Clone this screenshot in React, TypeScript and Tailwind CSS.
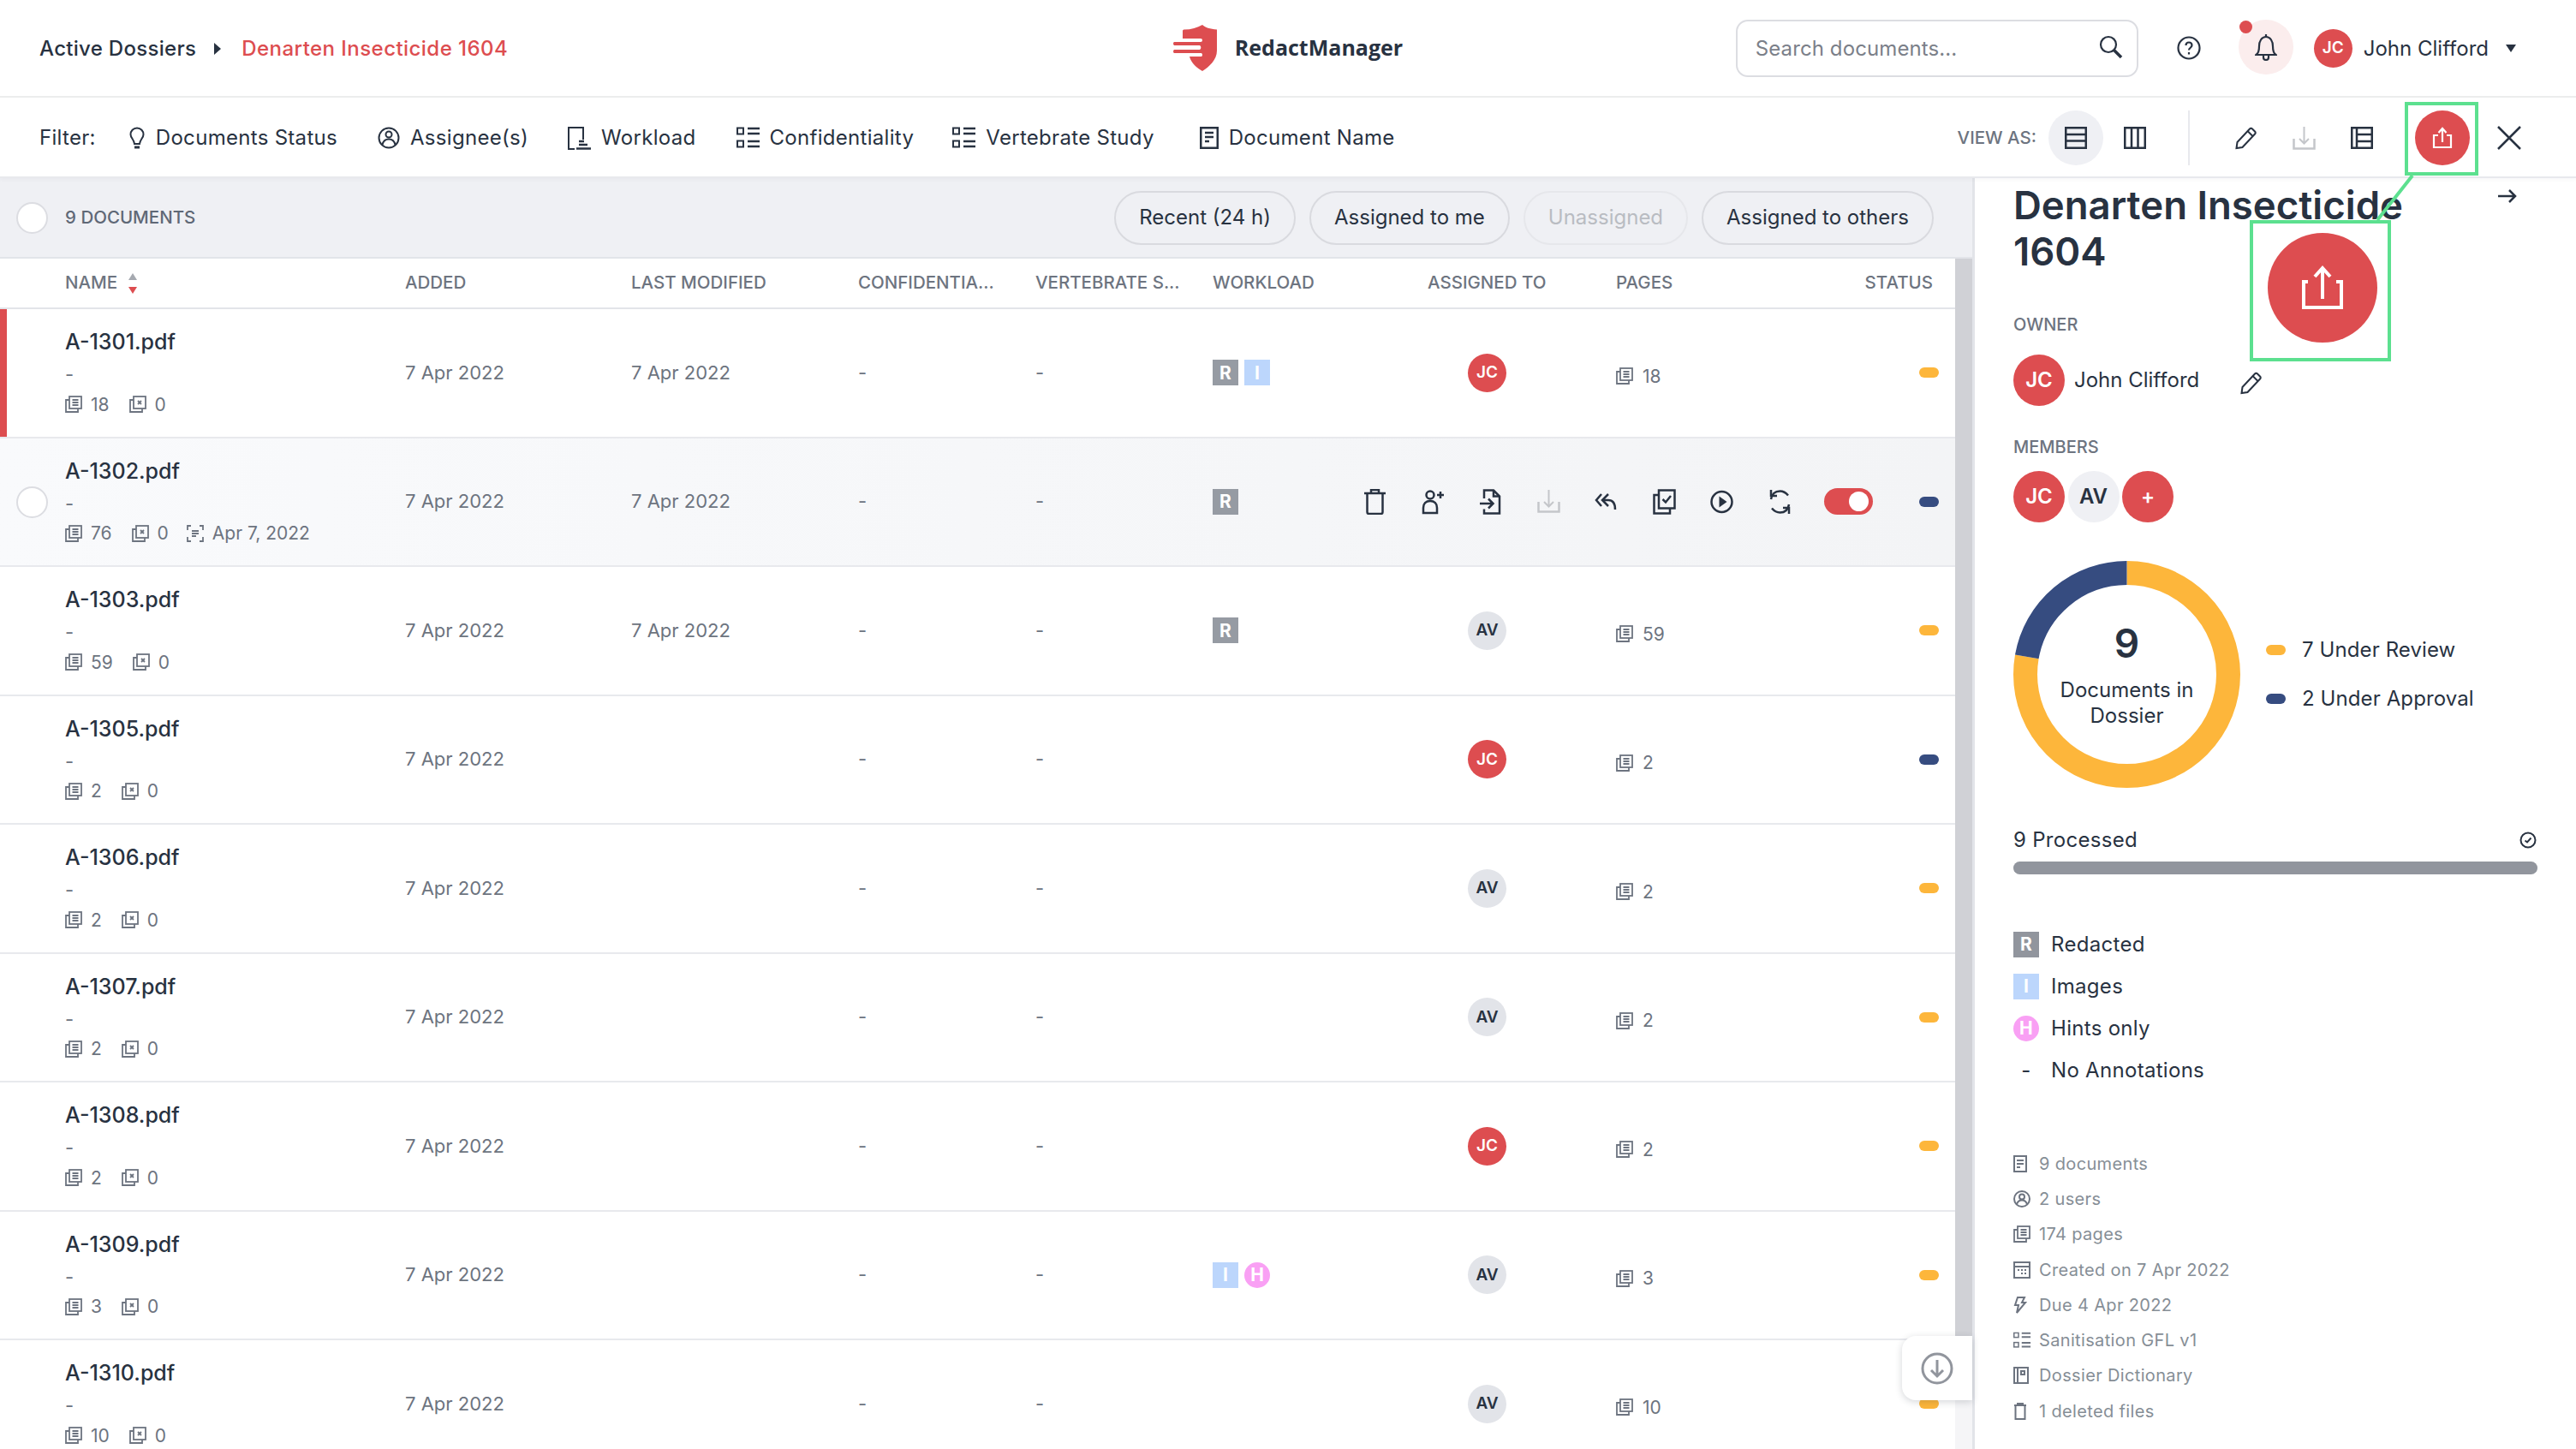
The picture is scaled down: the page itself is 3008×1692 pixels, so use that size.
import React, { FunctionComponent, ReactNode } from 'react'

const Ico: FunctionComponent<{ size?: number; w?: number; children: ReactNode; className?: string; sw?: number }> = ({
  size = 28,
  w,
  children,
  className = 'text-[#283241]',
  sw = 2,
}) => (
  <svg
    width={w ?? size}
    height={size}
    viewBox={`0 0 ${w ?? size} ${size}`}
    fill="none"
    stroke="currentColor"
    strokeWidth={sw}
    className={`shrink-0 ${className}`}
  >
    {children}
  </svg>
)

const BulbIcon = () => (
  <Ico w={20} size={26}>
    <path d="M10 1.500c4.500 0 7.500 3.500 7.500 7.500 0 4-4 6-4.500 11H7C6.500 15 2.500 13 2.500 9c0-4 3-7.500 7.500-7.500z" />
    <path d="M7 24h6" strokeWidth="3" />
  </Ico>
)
const UserCircleIcon: FunctionComponent<{ className?: string }> = ({ className }) => (
  <Ico size={26} className={className} w={26}>
    <circle cx="13" cy="13" r="11.500" />
    <circle cx="13" cy="9" r="3.500" />
    <path d="M5.500 21c1-4.500 4-6.500 7.500-6.500s6.500 2 7.500 6.500" />
  </Ico>
)
const WorkloadIcon = () => (
  <Ico w={28} size={28}>
    <path d="M9 27H2V2h17v14" />
    <path d="M14 18h6M14 22h10M11 26.500h17" strokeWidth="2.500" />
  </Ico>
)
const BoxListIcon: FunctionComponent<{ className?: string }> = ({ className }) => (
  <Ico w={27} size={26} className={className}>
    <rect x="1" y="1.500" width="7" height="7" />
    <rect x="1" y="16.500" width="7" height="7" />
    <path d="M13 2h14M13 8h14M13 17h14M13 23h14" strokeWidth="2.500" />
  </Ico>
)
const DocIcon = () => (
  <Ico w={22} size={26} sw={2.500}>
    <rect x="1.250" y="1.250" width="19.500" height="23.500" />
    <path d="M6 7h10M6 12h10M6 17h5" />
  </Ico>
)
const RowsIcon = () => (
  <Ico w={26} size={26} sw={2.500}>
    <rect x="1.250" y="1.250" width="23.500" height="23.500" />
    <path d="M1 9h24M1 16.500h24" />
  </Ico>
)
const ColsIcon = () => (
  <Ico w={26} size={26} sw={2.500}>
    <rect x="1.250" y="1.250" width="23.500" height="23.500" />
    <path d="M9 1v24M16.500 1v24" />
  </Ico>
)
const TableIcon = () => (
  <Ico w={26} size={26} sw={2.500}>
    <rect x="1.250" y="1.250" width="23.500" height="23.500" />
    <path d="M7 1v24M7 9h18M7 17h18" />
  </Ico>
)
const PencilIcon = () => (
  <Ico w={27} size={27}>
    <path d="M2.500 25l1-7L18 2.500c1-1 2-1 3 0l3 3c1 1 1 2 0 3L9.500 24z" />
    <path d="M15.500 5l6 6" />
  </Ico>
)
const DownloadIcon = () => (
  <Ico w={27} size={27} className="text-[#c4c6ca]">
    <path d="M13.500 0v19M8 14l5.500 5.500L19 14" />
    <path d="M1.500 14v11.500h24V14" strokeWidth="2.500" />
  </Ico>
)
const ExportIcon: FunctionComponent<{ big?: boolean }> = ({ big }) => (
  <Ico size={big ? 54 : 26} w={big ? 48 : 24} className="text-white" sw={big ? 4 : 2.200}>
    {big ? (
      <>
        <path d="M7 20H2v30h44V20h-6" />
        <path d="M24 40V4M15 14l9-10 9 10" />
      </>
    ) : (
      <>
        <path d="M7 10H2v14h20V10h-5" />
        <path d="M12 18V2M7.500 7L12 2l4.500 5" />
      </>
    )}
  </Ico>
)

const PagesIcon: FunctionComponent = () => (
  <Ico w={20} size={20} className="text-[#6d7480]" sw={1.800}>
    <rect x="5" y="1" width="14" height="14" />
    <path d="M5 5H1v14h14v-4M8.500 5h7M8.500 8h7M8.500 11h7" />
  </Ico>
)
const ExcludedIcon: FunctionComponent = () => (
  <Ico w={20} size={20} className="text-[#6d7480]" sw={1.800}>
    <rect x="5" y="1" width="14" height="14" />
    <path d="M5 5H1v14h14v-4M10 6l4 4M14 6l-4 4" />
  </Ico>
)
const OcrIcon: FunctionComponent = () => (
  <Ico w={20} size={20} className="text-[#6d7480]" sw={1.800}>
    <path d="M1 6V1h4M15 1h4v5M1 14v5h4M15 19h4v-5M6 7h8M6 10h8M6 13h5" />
  </Ico>
)

const Avatar: FunctionComponent<{ initials: string; large?: boolean; light?: boolean }> = ({ initials, large, light }) => {
  const isRed = initials === 'JC' || initials === '+'
  return (
    <div
      className={`flex items-center justify-center rounded-full font-semibold shrink-0 ${
        large ? 'w-[60px] h-[60px] text-[24px]' : 'w-[45px] h-[45px] text-[19px]'
      } ${isRed ? 'bg-[#dd4d50] text-white' : light ? 'bg-[#eff0f4] text-[#283241]' : 'bg-[#e2e4e9] text-[#283241]'}`}
    >
      {initials}
    </div>
  )
}

const Badge: FunctionComponent<{ type: string }> = ({ type }) => {
  if (type === 'R')
    return <div className="w-[30px] h-[30px] flex items-center justify-center bg-[#969ba3] text-white text-[21px] font-bold">R</div>
  if (type === 'I')
    return <div className="w-[30px] h-[30px] flex items-center justify-center bg-[#bcd6fc] text-white text-[21px] font-bold">I</div>
  return <div className="w-[30px] h-[30px] rounded-full flex items-center justify-center bg-[#f9a0f4] text-white text-[21px] font-bold">H</div>
}

const StatusBar: FunctionComponent<{ navy?: boolean }> = ({ navy }) => (
  <div className={`w-[23px] h-[12px] rounded-full ${navy ? 'bg-[#364c80]' : 'bg-[#fdb63b]'}`} />
)

const Circle: FunctionComponent = () => (
  <div className="w-[37px] h-[37px] rounded-full bg-white border-2 border-[#dcdde2]" />
)

type Doc = {
  name: string
  pages: number
  ocr?: string
  workload: string[]
  owner: string
  navy?: boolean
  modified?: boolean
}

const docs: Doc[] = [
  { name: 'A-1301.pdf', pages: 18, workload: ['R', 'I'], owner: 'JC', modified: true },
  { name: 'A-1302.pdf', pages: 76, ocr: 'Apr 7, 2022', workload: ['R'], owner: '', navy: true, modified: true },
  { name: 'A-1303.pdf', pages: 59, workload: ['R'], owner: 'AV', modified: true },
  { name: 'A-1305.pdf', pages: 2, workload: [], owner: 'JC', navy: true },
  { name: 'A-1306.pdf', pages: 2, workload: [], owner: 'AV' },
  { name: 'A-1307.pdf', pages: 2, workload: [], owner: 'AV' },
  { name: 'A-1308.pdf', pages: 2, workload: [], owner: 'JC' },
  { name: 'A-1309.pdf', pages: 3, workload: ['I', 'H'], owner: 'AV' },
  { name: 'A-1310.pdf', pages: 10, workload: [], owner: 'AV' },
]

const rowCols = 'grid grid-cols-[473px_264px_265px_207px_207px_251px_220px_1fr_160px]'

const RowActions: FunctionComponent = () => (
  <div className="absolute right-[96px] top-0 bottom-0 flex items-center gap-[40.500px]">
    <Ico w={27} size={30}>
      <path d="M1 5h25M9 4V1h9v3" strokeWidth="2.500" />
      <path d="M4.500 5v22c0 1 .5 2 2 2h14c1.500 0 2-1 2-2V5" strokeWidth="2.500" />
    </Ico>
    <Ico w={27} size={30}>
      <circle cx="10" cy="7" r="4.500" strokeWidth="2.500" />
      <path d="M2 28v-6c0-5 3-8 8-8s8 3 8 8v6zM18 7h8M22 3v8" strokeWidth="2.500" />
    </Ico>
    <Ico w={27} size={30} sw={2.500}>
      <path d="M6 11V1.500h11l7 7v20H6v-5" />
      <path d="M17 1.500v7h7M1 17h15M11 11.500l5.500 5.500-5.500 5.500" />
    </Ico>
    <DownloadIcon />
    <Ico w={27} size={24} sw={2.500}>
      <path d="M8 3L2 10l6 7M16 3l-7 7 7 7M9 10h7c5 0 8 4 8 11" />
    </Ico>
    <Ico w={27} size={30} sw={2.500}>
      <rect x="7" y="1.500" width="18.500" height="21" />
      <path d="M7 7H1.500v21.500H20V23M11.500 12l3.500 3.500 6-7.500" />
    </Ico>
    <Ico w={27} size={30} sw={2.500}>
      <circle cx="13.500" cy="15" r="12" />
      <path d="M10.500 8.500v13l9-6.500z" fill="currentColor" stroke="none" />
    </Ico>
    <Ico w={27} size={30} sw={2.500}>
      <path d="M3 12C4 6 8 2.500 13.500 2.500c4 0 7 2 9.500 5M24 18c-1 6-5 9.500-10.500 9.500-4 0-7-2-9.500-5" />
      <path d="M3 1v7h7M24 29v-7h-7" />
    </Ico>
    <div className="w-[57px] h-[31px] rounded-full bg-[#dd4d50] flex items-center justify-end pr-[5px] -ml-[2px]">
      <div className="w-[23px] h-[23px] rounded-full bg-white" />
    </div>
  </div>
)

const DocRow: FunctionComponent<{ doc: Doc; index: number }> = ({ doc, index }) => {
  const hovered = index === 1
  const date = 'text-[22px] text-[#6d7480] self-center'
  return (
    <div
      className={`relative h-[150.500px] border-b-2 border-[#e8e9ed] ${rowCols} ${
        hovered ? 'bg-gradient-to-r from-[#f9fafc] to-[#f3f4f6]' : 'bg-white'
      } ${index === 0 ? 'shadow-[inset_8px_0_0_#dd4d50]' : ''}`}
    >
      {hovered && (
        <div className="absolute left-[19px] top-[56px]">
          <Circle />
        </div>
      )}
      <div className="flex flex-col justify-center pl-[76px] pb-[1px] leading-none">
        <div className="text-[25px] font-medium text-[#283241] h-[30px] leading-[30px]">{doc.name}</div>
        <div className="text-[22px] text-[#6d7480] mt-[8px] h-[30px] leading-[30px]">-</div>
        <div className="flex items-center text-[21px] text-[#6d7480] mt-[7px] h-[26px]">
          <PagesIcon />
          <span className="ml-[10px] mr-[23px]">{doc.pages}</span>
          <ExcludedIcon />
          <span className="ml-[10px]">0</span>
          {doc.ocr && (
            <>
              <span className="ml-[21px]">
                <OcrIcon />
              </span>
              <span className="ml-[10px]">{doc.ocr}</span>
            </>
          )}
        </div>
      </div>
      <div className={date}>7 Apr 2022</div>
      <div className={date}>{doc.modified ? '7 Apr 2022' : ''}</div>
      <div className={date}>-</div>
      <div className={date}>-</div>
      <div className="flex items-center gap-[7px]">
        {doc.workload.map((b) => (
          <Badge key={b} type={b} />
        ))}
      </div>
      <div className="flex items-center pl-[47px]">{doc.owner && <Avatar initials={doc.owner} />}</div>
      {doc.owner ? (
        <div className="flex items-center gap-[11px] text-[21px] text-[#6d7480] pt-[8px]">
          <PagesIcon />
          {doc.pages}
        </div>
      ) : (
        <div />
      )}
      <div className="flex items-center justify-end pr-[19px]">
        <StatusBar navy={doc.navy} />
      </div>
      {hovered && <RowActions />}
    </div>
  )
}

const FilterItem: FunctionComponent<{ icon: ReactNode; label: string; className?: string }> = ({ icon, label, className = '' }) => (
  <div className={`flex items-center gap-[12px] ${className}`}>
    {icon}
    <span>{label}</span>
  </div>
)

const SectionLabel: FunctionComponent<{ children?: ReactNode }> = ({ children }) => (
  <div className="text-[20px] leading-[24px] font-medium text-[#6d7480]">{children}</div>
)

const Stat: FunctionComponent<{ icon: ReactNode; label: string }> = ({ icon, label }) => (
  <div className="flex items-center h-[41.300px] text-[#868e96] text-[20px] tracking-[0.35px]">
    <div className="w-[30px] flex items-center">{icon}</div>
    {label}
  </div>
)

const statIcon = 'text-[#6d7480]'

const DetailsPanel: FunctionComponent = () => (
  <div className="w-[705px] shrink-0 border-l-[3px] border-[#e2e4e9] pl-[45px] pr-[45px] pt-[5px] bg-white">
    <div className="relative">
      <h1 className="text-[45.500px] leading-[54px] font-semibold text-[#283241] w-[480px]">Denarten Insecticide 1604</h1>
      <svg width="28" height="20" viewBox="0 0 28 20" fill="none" stroke="currentColor" strokeWidth="2.500" className="absolute right-[22px] top-[6px] text-[#283241]">
        <path d="M4 10h20M17 3l7 7-7 7" />
      </svg>
    </div>
    <div className="mt-[46px]">
      <SectionLabel>OWNER</SectionLabel>
    </div>
    <div className="flex items-center mt-[23px] h-[60px]">
      <Avatar initials="JC" large />
      <span className="ml-[11px] text-[24px] text-[#283241]">John Clifford</span>
      <span className="ml-[47px] mt-[6px]">
        <PencilIcon />
      </span>
    </div>
    <div className="mt-[36px]">
      <SectionLabel>MEMBERS</SectionLabel>
    </div>
    <div className="flex gap-[3.500px] mt-[16px]">
      <Avatar initials="JC" large />
      <Avatar initials="AV" large light />
      <Avatar initials="+" large />
    </div>
    <div className="flex items-center gap-[30px] mt-[45px]">
      <div className="relative w-[265px] h-[265px]">
        <svg width="265" height="265" viewBox="0 0 265 265" fill="none" strokeWidth="28" className="-rotate-90">
          <circle cx="132.500" cy="132.500" r="118.500" stroke="#fdb63b" pathLength={9} strokeDasharray="7 2" />
          <circle cx="132.500" cy="132.500" r="118.500" stroke="#364c80" pathLength={9} strokeDasharray="2 7" strokeDashoffset={2} />
        </svg>
        <div className="absolute inset-0 flex flex-col items-center justify-center text-center text-[#283241] pb-[2px]">
          <div className="text-[46px] leading-[56px] font-semibold">9</div>
          <div className="text-[24px] leading-[30px] mt-[12px]">
            Documents in
            <br />
            Dossier
          </div>
        </div>
      </div>
      <div className="flex flex-col gap-[27px] text-[24px] leading-[30px] text-[#283241] tracking-[0.1px]">
        <div className="flex items-center gap-[19px]">
          <StatusBar />7 Under Review
        </div>
        <div className="flex items-center gap-[19px]">
          <StatusBar navy />2 Under Approval
        </div>
      </div>
    </div>
    <div className="flex items-center justify-between mt-[46px] h-[30px] text-[24px] text-[#283241] tracking-[0.3px]">
      9 Processed
      <svg width="20" height="20" viewBox="0 0 20 20" fill="none" stroke="currentColor" strokeWidth="2" className="mr-[1px]">
        <circle cx="10" cy="10" r="8.500" />
        <path d="M6.500 10.500l2.500 2 4.500-5" />
      </svg>
    </div>
    <div className="h-[15px] mt-[10px] rounded-full bg-[#91959d]" />
    <div className="mt-[57px] text-[24px] text-[#283241] tracking-[0.3px]">
      {[
        { label: 'Redacted', badge: <div className="w-[30px] h-[30px] flex items-center justify-center bg-[#91959d] text-white text-[21px] font-bold">R</div> },
        { label: 'Images', badge: <div className="w-[30px] h-[30px] flex items-center justify-center bg-[#bcd6fc] text-white text-[21px] font-bold">I</div> },
        { label: 'Hints only', badge: <div className="w-[30px] h-[30px] rounded-full flex items-center justify-center bg-[#f9a0f4] text-white text-[21px] font-bold">H</div> },
        { label: 'No Annotations', badge: <div className="w-[30px] text-center">-</div> },
      ].map((item) => (
        <div key={item.label} className="flex items-center gap-[14px] h-[49px]">
          {item.badge}
          {item.label}
        </div>
      ))}
    </div>
    <div className="mt-[64px]">
      <Stat
        label="9 documents"
        icon={
          <Ico w={16} size={20} className={statIcon}>
            <rect x="1" y="1" width="14" height="18" />
            <path d="M4 6h8M4 10h8M4 14h4" />
          </Ico>
        }
      />
      <Stat
        label="2 users"
        icon={
          <Ico w={20} size={20} className={statIcon}>
            <circle cx="10" cy="10" r="9" />
            <circle cx="10" cy="7.500" r="3" />
            <path d="M4 16c1-3 3-4.500 6-4.500s5 1.500 6 4.500" />
          </Ico>
        }
      />
      <Stat label="174 pages" icon={<PagesIcon />} />
      <Stat
        label="Created on 7 Apr 2022"
        icon={
          <Ico w={20} size={20} className={statIcon}>
            <rect x="1" y="1" width="18" height="18" />
            <path d="M1 6h18M5 10h2M9 10h2M13 10h2M9 14h2M13 14h2" />
          </Ico>
        }
      />
      <Stat
        label="Due 4 Apr 2022"
        icon={
          <Ico w={16} size={20} className={statIcon}>
            <path d="M5 1h8l-3 6h4L4 19l2-9H2z" />
          </Ico>
        }
      />
      <Stat label="Sanitisation GFL v1" icon={<span className="scale-[0.75] origin-left block"><BoxListIcon className={statIcon} /></span>} />
      <Stat
        label="Dossier Dictionary"
        icon={
          <Ico w={18} size={20} className={statIcon}>
            <rect x="1" y="1" width="16" height="18" />
            <path d="M5 1v18M9 5h4v4H9z" />
          </Ico>
        }
      />
      <Stat
        label="1 deleted files"
        icon={
          <Ico w={16} size={20} className={statIcon}>
            <path d="M1 3h14M5 3V1h6v2M2.500 3v16h11V3" />
          </Ico>
        }
      />
    </div>
  </div>
)

export default function App() {
  return (
    <div className="relative w-[3008px] h-[1692px] overflow-hidden bg-white flex flex-col text-[#283241] font-['Inter',sans-serif]">
      {/* top bar */}
      <header className="h-[114px] shrink-0 grid grid-cols-[1fr_auto_1fr] items-center border-b-2 border-[#eceded] px-[46px]">
        <div className="flex items-center text-[24px] font-medium tracking-[0.3px] pt-[2px]">
          <span>Active Dossiers</span>
          <svg width="10" height="14" viewBox="0 0 10 14" className="ml-[20px] mr-[23px] text-[#283241]" fill="currentColor">
            <path d="M1 0l8 7-8 7z" />
          </svg>
          <span className="text-[#dd4d50] tracking-[0.45px]">Denarten Insecticide 1604</span>
        </div>
        <div className="flex items-center gap-[20px]">
          <svg width="52" height="54" viewBox="0 0 52 54">
            <path
              d="M34 0c3 3 9 5 17 5.500V30c0 11-9 19-17 24-6-3.500-13-9-15-17h14a2.500 2.500 0 0 0 0-4H1a2.500 2.500 0 0 1 0-4h30a3 3 0 0 0 0-5H1a2.500 2.500 0 0 1 0-4h31a2 2 0 0 0 0-4H11V7c0-1 1-1.500 2-1.500 8 0 15-2 21-5.500z"
              fill="#dd4d50"
            />
          </svg>
          <span className="font-['Open_Sans',sans-serif] font-bold text-[25px] text-[#283241]">RedactManager</span>
        </div>
        <div className="flex items-center justify-end pr-[24px]">
          <div className="w-[470px] h-[67px] flex items-center justify-between rounded-[14px] border-2 border-[#dcdde2] pl-[21px] pr-[16px] pt-[2px] text-[24px] text-[#7b8089] tracking-[0.1px]">
            Search documents...
            <svg width="28" height="28" viewBox="0 0 28 28" fill="none" stroke="#283241" strokeWidth="2.200" className="-mt-[4px]">
              <circle cx="11" cy="11" r="9" />
              <path d="M17 17l9 9" strokeWidth="3.500" />
            </svg>
          </div>
          <svg width="28" height="28" viewBox="0 0 28 28" fill="none" stroke="#283241" strokeWidth="2.200" className="ml-[45px]">
            <circle cx="14" cy="14" r="12.500" />
            <path d="M10.500 11c0-2 1.500-3.500 3.500-3.500s3.500 1.500 3.500 3.500c0 2.500-3.500 3-3.500 5.500M14 19v2.500" />
          </svg>
          <div className="relative w-[64px] h-[64px] ml-[44px] -mt-[3px] rounded-full bg-[#fbeded] flex items-center justify-center">
            <svg width="26" height="32" viewBox="0 0 26 32" fill="none" stroke="#283241" strokeWidth="2.200">
              <path d="M1.500 25c3-2 3.500-5 3.500-10 0-6 3-11 8-11s8 5 8 11c0 5 .5 8 3.500 10zM10 25v3c0 4 6 4 6 0v-3" />
              <path d="M13 1v3" />
            </svg>
            <div className="absolute left-[1px] top-[1px] w-[15px] h-[15px] rounded-full bg-[#dd4d50]" />
          </div>
          <div className="w-[45px] h-[45px] ml-[24px] rounded-full bg-[#dd4d50] text-white text-[19px] font-semibold flex items-center justify-center">JC</div>
          <span className="ml-[13px] text-[24px] pt-[1px]">John Clifford</span>
          <svg width="12" height="9" viewBox="0 0 12 9" className="ml-[20px]" fill="#283241">
            <path d="M0 0h12L6 9z" />
          </svg>
        </div>
      </header>

      {/* filter bar */}
      <div className="h-[94px] shrink-0 flex items-center justify-between border-b-2 border-[#e8e9ed] pl-[46px] pr-[64px] pt-[2px] text-[24px] tracking-[0.3px] shadow-[0_2px_4px_rgba(40,50,65,0.04)] z-10 bg-white">
        <div className="flex items-center gap-[47px]">
          <div className="flex items-center gap-[38px]">
            <span>Filter:</span>
            <FilterItem icon={<BulbIcon />} label="Documents Status" />
          </div>
          <FilterItem icon={<UserCircleIcon />} label="Assignee(s)" />
          <FilterItem icon={<WorkloadIcon />} label="Workload" className="-ml-[2px]" />
          <FilterItem icon={<BoxListIcon />} label="Confidentiality" />
          <FilterItem icon={<BoxListIcon />} label="Vertebrate Study" className="-ml-[2px]" />
          <FilterItem icon={<DocIcon />} label="Document Name" className="ml-[6px]" />
        </div>
        <div className="flex items-center">
          <span className="text-[20.500px] font-medium text-[#6d7480] tracking-normal">VIEW AS:</span>
          <div className="w-[64px] h-[64px] ml-[14px] rounded-full bg-[#eff0f4] flex items-center justify-center">
            <RowsIcon />
          </div>
          <div className="w-[26px] ml-[24px]">
            <ColsIcon />
          </div>
          <div className="w-[2px] h-[64px] ml-[49px] bg-[#e8e9ed]" />
          <div className="ml-[52px] flex items-center gap-[41px]">
            <PencilIcon />
            <DownloadIcon />
            <TableIcon />
          </div>
          <div className="w-[64px] h-[64px] ml-[49px] rounded-full bg-[#dd4d50] flex items-center justify-center">
            <ExportIcon />
          </div>
          <svg width="28" height="28" viewBox="0 0 28 28" fill="none" stroke="#283241" strokeWidth="2.500" className="ml-[32px]">
            <path d="M1 1l26 26M27 1L1 27" />
          </svg>
        </div>
      </div>

      {/* main area */}
      <div className="flex flex-1 min-h-0">
        <div className="relative w-[2303px] shrink-0 flex flex-col">
          <div className="h-[94px] shrink-0 bg-[#eff0f4] border-b-2 border-[#e2e4e9] flex items-center justify-between pl-[19px] pr-[45px]">
            <div className="flex items-center gap-[20px]">
              <Circle />
              <span className="text-[20.500px] font-medium text-[#5f6876]">9 DOCUMENTS</span>
            </div>
            <div className="flex items-center gap-[16px] text-[24px]">
              <div className="h-[63px] px-[27px] flex items-center rounded-full border-2 border-[#d9dadf]">Recent (24 h)</div>
              <div className="h-[63px] px-[27px] flex items-center rounded-full border-2 border-[#d9dadf]">Assigned to me</div>
              <div className="h-[63px] px-[27px] flex items-center rounded-full border-2 border-[#e6e7eb] text-[#b9bcc2]">Unassigned</div>
              <div className="h-[63px] px-[27px] flex items-center rounded-full border-2 border-[#d9dadf]">Assigned to others</div>
            </div>
          </div>
          <div className="flex flex-1 min-h-0">
            <div className="w-[2283px] shrink-0">
              <div className={`h-[59px] border-b-2 border-[#e2e4e9] items-center text-[20.500px] font-medium text-[#6d7480] ${rowCols}`}>
                <div className="pl-[76px] flex items-center gap-[12px]">
                  NAME
                  <svg width="12" height="24" viewBox="0 0 12 24">
                    <path d="M6 0l5 8H1z" fill="#a5a9b0" />
                    <path d="M6 24l5-8H1z" fill="#dd4d50" />
                  </svg>
                </div>
                <div>ADDED</div>
                <div>LAST MODIFIED</div>
                <div>CONFIDENTIA...</div>
                <div>VERTEBRATE S...</div>
                <div>WORKLOAD</div>
                <div>ASSIGNED TO</div>
                <div>PAGES</div>
                <div className="text-right pr-[26px]">STATUS</div>
              </div>
              {docs.map((doc, i) => (
                <DocRow key={doc.name} doc={doc} index={i} />
              ))}
            </div>
            <div className="w-[20px] shrink-0 flex flex-col">
              <div className="h-[1309px] bg-[#d0d1d6]" />
              <div className="flex-1 bg-[#f5f5f7]" />
            </div>
          </div>
          <div className="absolute right-0 top-[1352px] w-[82px] h-[75px] bg-white rounded-l-[16px] shadow-[0_2px_8px_rgba(40,50,65,0.2)] flex items-center justify-center">
            <svg width="38" height="38" viewBox="0 0 38 38" fill="none" stroke="#91959d" strokeWidth="3">
              <circle cx="19" cy="19" r="17" />
              <path d="M19 9v19M12 21l7 7 7-7" />
            </svg>
          </div>
        </div>
        <DetailsPanel />
      </div>

      {/* annotation overlay */}
      <div className="absolute z-20 left-[2808px] top-[119px] w-[86px] h-[86px] border-[4px] border-[#5ce08f]" />
      <svg width="60" height="60" viewBox="0 0 60 60" className="absolute z-20 left-[2770px] top-[201px]" fill="none" stroke="#5ce08f" strokeWidth="4">
        <path d="M47 4L6 56" />
      </svg>
      <div className="absolute z-20 left-[2627px] top-[257px] w-[165px] h-[165px] border-[4px] border-[#5ce08f] bg-white flex items-center justify-center pl-[5px] pb-[8px]">
        <div className="w-[128px] h-[128px] rounded-full bg-[#dd4d50] flex items-center justify-center">
          <ExportIcon big />
        </div>
      </div>
    </div>
  )
}
